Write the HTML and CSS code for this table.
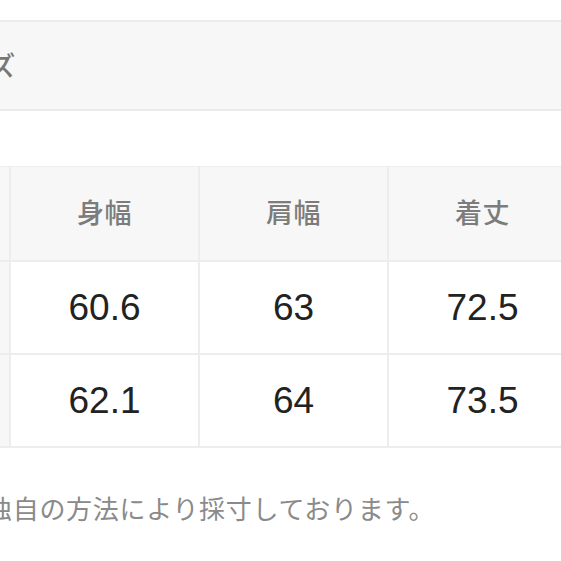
FILE: index.html
```html
<!DOCTYPE html>
<html lang="ja">
<head>
<meta charset="utf-8">
<link rel="stylesheet" href="styles.css">
</head>
<body>
<div class="page">
  <div class="section-head"><span class="section-title">サイズ</span></div>
  <div class="size-table">
    <div class="cell head label"></div>
    <div class="cell head">身幅</div>
    <div class="cell head">肩幅</div>
    <div class="cell head">着丈</div>
    <div class="cell label"></div>
    <div class="cell val">60.6</div>
    <div class="cell val">63</div>
    <div class="cell val">72.5</div>
    <div class="cell label"></div>
    <div class="cell val">62.1</div>
    <div class="cell val">64</div>
    <div class="cell val">73.5</div>
  </div>
  <p class="note">独自の方法により採寸しております。</p>
</div>
</body>
</html>
```
FILE: styles.css
```css
html, body {
  margin: 0;
  padding: 0;
  background: #ffffff;
  overflow: hidden;
}
body {
  font-family: "Noto Sans CJK JP", "Noto Sans", sans-serif;
}
.page {
  margin-left: -100px;
  width: 720px;
  padding-top: 20px;
}
.section-head {
  height: 87px;
  background: #f7f7f7;
  border-top: 2px solid #ebebeb;
  border-bottom: 2px solid #ebebeb;
  display: flex;
  align-items: center;
  padding-left: 34px;
}
.section-title {
  font-size: 27px;
  color: #777777;
  font-weight: 500;
  letter-spacing: 0.5px;
  padding-bottom: 2px;
}
.size-table {
  margin-top: 55px;
  display: grid;
  grid-template-columns: 109px 187px 187px 187px;
  grid-template-rows: 93px 91px 91px;
  gap: 2px;
  padding: 1px 0 2px 0;
  background: #ededed;
  width: 678px;
}
.cell {
  background: #ffffff;
  display: flex;
  align-items: center;
  justify-content: center;
}
.cell.head {
  background: #f7f7f7;
  font-size: 27px;
  font-weight: 500;
  color: #7c7c7c;
  letter-spacing: 0.5px;
  padding-bottom: 4px;
  box-sizing: border-box;
}
.cell.label {
  background: #f7f7f7;
}
.cell.val {
  font-family: "Liberation Sans", Arial, sans-serif;
  font-size: 37px;
  color: #222222;
}
.note {
  margin: 41px 0 0 86px;
  font-size: 26px;
  letter-spacing: 0.7px;
  color: #8a8a8a;
  white-space: nowrap;
}
```
